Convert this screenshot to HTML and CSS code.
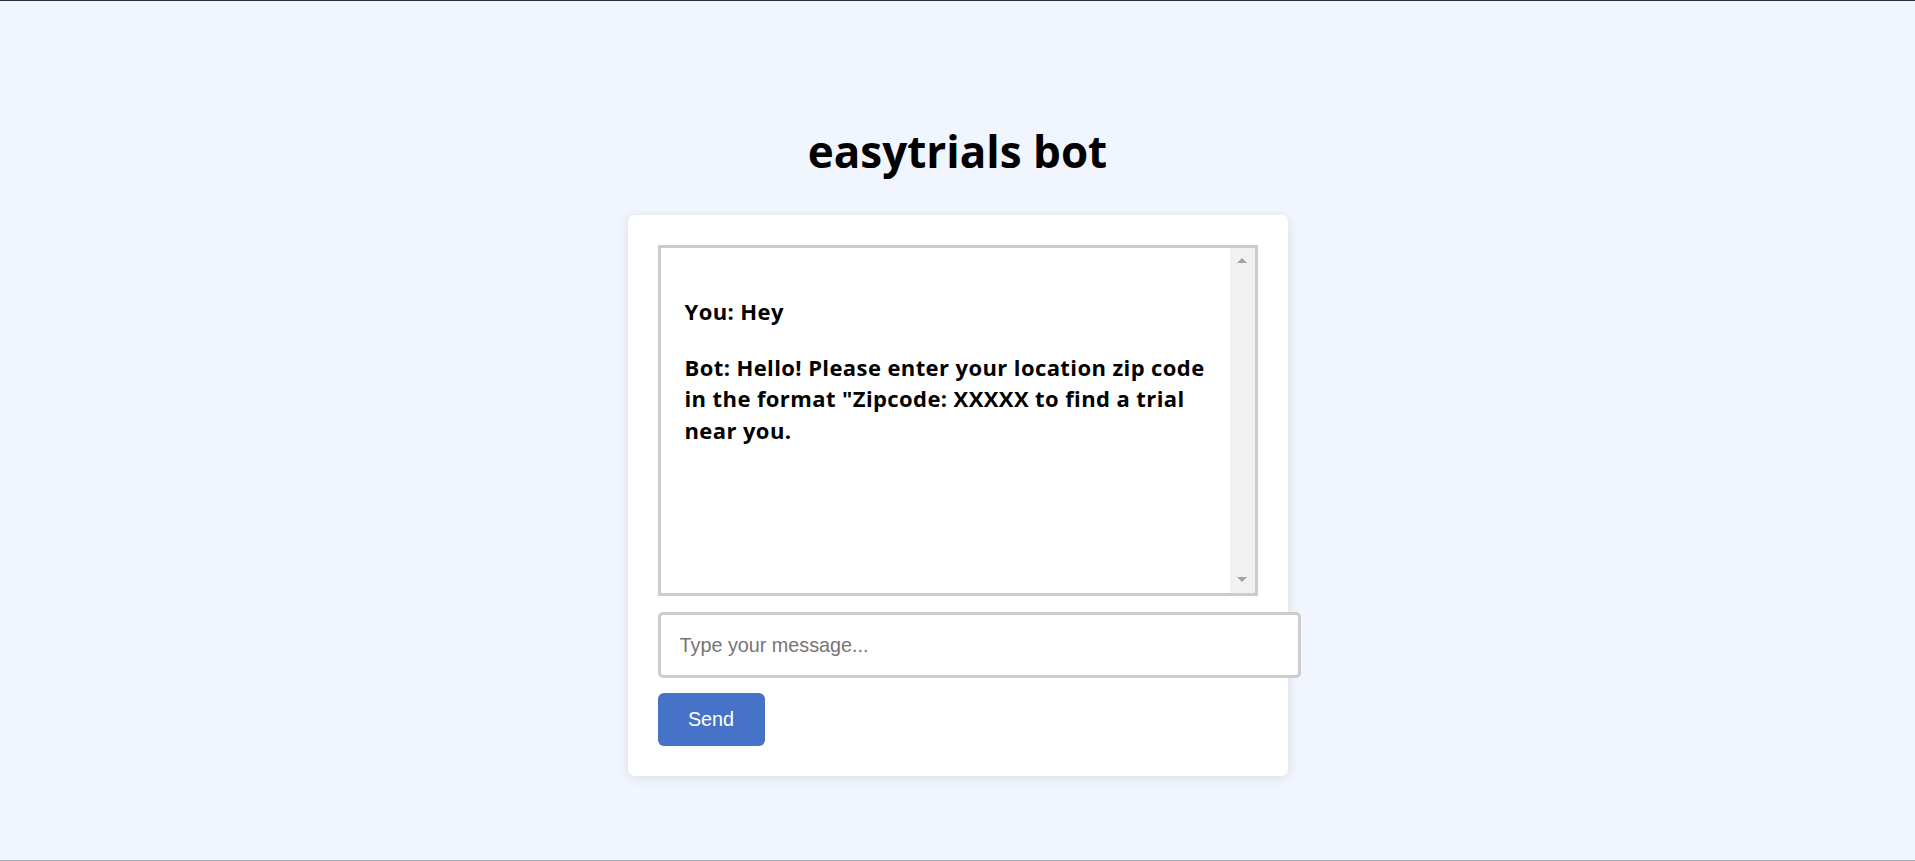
FILE: index.html
```html
<!DOCTYPE html>
<html lang="en">
<head>
<meta charset="utf-8">
<title>easytrials bot</title>
<link rel="stylesheet" href="styles.css">
</head>
<body>
<div class="page">
  <h1 class="title">easytrials bot</h1>
  <div class="card">
    <div class="chat">
      <div class="messages">
        <p class="msg">You: Hey</p>
        <p class="msg">Bot: Hello! Please enter your location zip code in the format "Zipcode: XXXXX to find a trial near you.</p>
      </div>
      <div class="scrollbar">
        <span class="arrow arrow-up"></span>
        <span class="arrow arrow-down"></span>
      </div>
    </div>
    <input class="input" type="text" placeholder="Type your message...">
    <button class="send" type="button">Send</button>
  </div>
</div>
</body>
</html>
```
FILE: styles.css
```css
html, body {
  margin: 0;
  padding: 0;
}
body {
  background: #f1f6fe;
  font-family: "Open Sans", "Noto Sans", sans-serif;
  color: #000;
}
.page {
  box-sizing: border-box;
  height: 861px;
  border-top: 1px solid #2b2d3a;
  border-bottom: 1px solid #a7abb2;
  display: flex;
  flex-direction: column;
  align-items: center;
  padding-top: 124px;
}
.title {
  margin: 0;
  font-size: 44px;
  line-height: 52px;
  font-weight: 700;
  letter-spacing: 0;
}
.card {
  box-sizing: border-box;
  width: 660px;
  margin-top: 38px;
  background: #fff;
  border-radius: 7px;
  box-shadow: 0 2px 12px rgba(0, 0, 0, 0.1);
  padding: 30px;
  display: flex;
  flex-direction: column;
  align-items: flex-start;
}
.chat {
  box-sizing: border-box;
  width: 600px;
  height: 351px;
  border: 3px solid #cccccc;
  display: flex;
}
.messages {
  flex: 1;
  padding: 48px 16px 0 24px;
  display: flex;
  flex-direction: column;
  gap: 24px;
}
.msg {
  margin: 0;
  font-size: 22px;
  line-height: 31.7px;
  font-weight: 700;
  letter-spacing: 0.4px;
}
.scrollbar {
  width: 25px;
  background: #f1f1f1;
  display: flex;
  flex-direction: column;
  justify-content: space-between;
  align-items: center;
  padding: 10px 0 11px;
}
.arrow {
  width: 0;
  height: 0;
  border-left: 5px solid transparent;
  border-right: 5px solid transparent;
}
.arrow-up {
  border-bottom: 5px solid #a3a3a3;
}
.arrow-down {
  border-top: 5px solid #a3a3a3;
}
.input {
  box-sizing: border-box;
  width: 643px;
  height: 66px;
  margin-top: 16px;
  border: 3px solid #cccccc;
  border-radius: 5px;
  padding: 0 19px;
  font-family: "Liberation Sans", Arial, sans-serif;
  font-size: 19.8px;
  color: #000;
  background: #fff;
  outline: none;
}
.input::placeholder {
  color: #757575;
}
.send {
  box-sizing: border-box;
  width: 107px;
  height: 53px;
  margin-top: 15px;
  border: none;
  border-radius: 6px;
  background: #4673c7;
  color: #fff;
  font-family: "Liberation Sans", Arial, sans-serif;
  font-size: 19.8px;
  padding: 0;
  cursor: pointer;
}
```
